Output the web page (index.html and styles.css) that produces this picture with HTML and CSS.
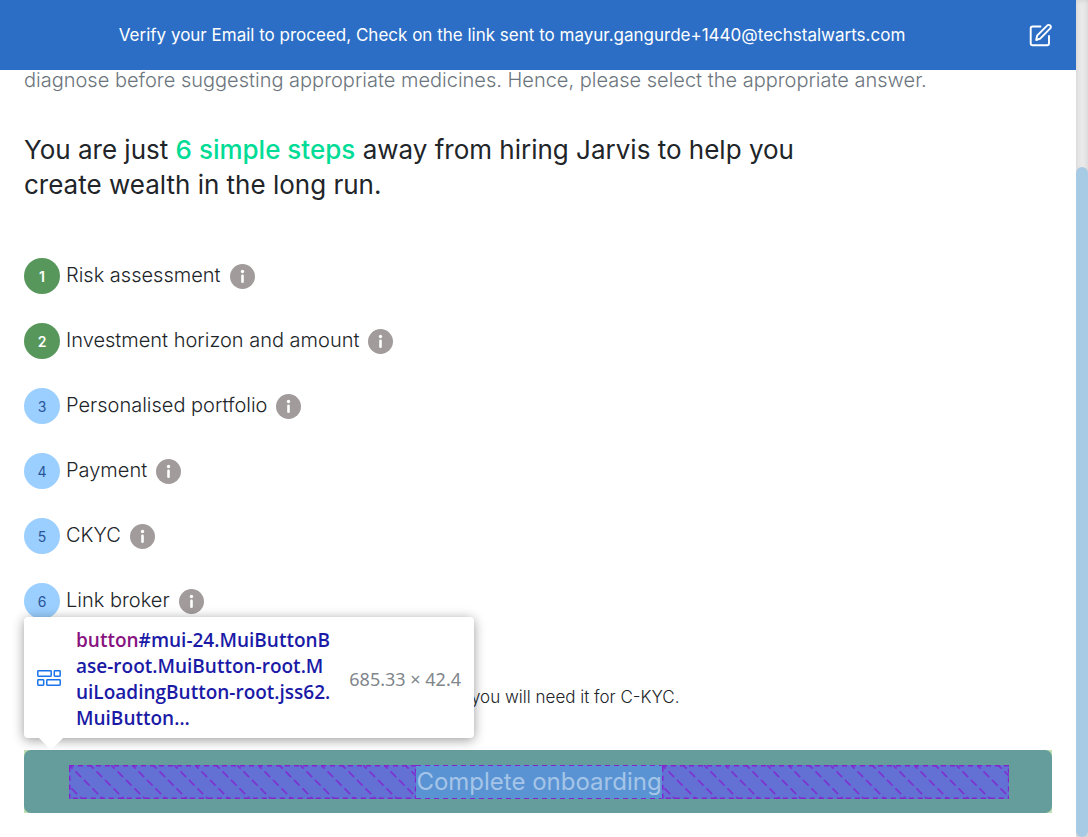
FILE: index.html
```html
<!DOCTYPE html>
<html lang="en">
<head>
<meta charset="utf-8">
<meta name="viewport" content="width=device-width, initial-scale=1">
<title>Onboarding</title>
<link rel="stylesheet" href="styles.css">
</head>
<body>
<svg class="defs" aria-hidden="true">
  <defs>
    <symbol id="info" viewBox="0 0 25 25">
      <circle cx="12.5" cy="12.5" r="12.5" fill="#a19c9b"/>
      <circle cx="12.5" cy="7.5" r="1.7" fill="#fff"/>
      <rect x="11.2" y="10.6" width="2.6" height="8.4" rx="1.2" fill="#fff"/>
    </symbol>
    <pattern id="hatch" width="21" height="36" patternUnits="userSpaceOnUse">
      <path d="M-44 -2L-2 40M-23 -2L19 40M-2 -2L40 40" fill="none" stroke="#7b34d0" stroke-width="1.8" stroke-dasharray="8 4"/>
    </pattern>
  </defs>
</svg>
<div class="page">
  <div class="view">
    <header class="banner">
      <p class="banner-text">Verify your Email to proceed, Check on the link sent to mayur.gangurde+1440@techstalwarts.com</p>
      <button class="edit" type="button" aria-label="Edit email">
        <svg width="24" height="24" viewBox="0 0 24 24" fill="none" stroke="#fff" stroke-width="1.9" stroke-linecap="round" stroke-linejoin="round">
          <path d="M12.500 3.500H4.600C3.600 3.500 2.700 4.300 2.700 5.300V20.300C2.700 21.300 3.500 22.200 4.600 22.200H19.100C20.200 22.200 21 21.300 21 20.300V13"/>
          <path d="M8.200 17L9.100 12.700L19.100 2.700C20 1.700 21.300 1.600 22.200 2.500C23.100 3.400 22.900 4.700 22 5.700L12.200 15.600Z"/>
        </svg>
      </button>
    </header>
    <main class="content">
      <p class="intro">diagnose before suggesting appropriate medicines. Hence, please select the appropriate answer.</p>
      <h1 class="title">You are just <span class="accent">6 simple steps</span> away from hiring Jarvis to help you create wealth in the long run.</h1>
      <ol class="steps">
        <li class="step done"><span class="num">1</span><span class="name">Risk assessment</span><svg class="info"><use href="#info"/></svg></li>
        <li class="step done"><span class="num">2</span><span class="name">Investment horizon and amount</span><svg class="info"><use href="#info"/></svg></li>
        <li class="step"><span class="num">3</span><span class="name">Personalised portfolio</span><svg class="info"><use href="#info"/></svg></li>
        <li class="step"><span class="num">4</span><span class="name">Payment</span><svg class="info"><use href="#info"/></svg></li>
        <li class="step"><span class="num">5</span><span class="name">CKYC</span><svg class="info"><use href="#info"/></svg></li>
        <li class="step"><span class="num">6</span><span class="name">Link broker</span><svg class="info"><use href="#info"/></svg></li>
      </ol>
      <p class="note">you will need it for C-KYC.</p>
      <div class="action">
        <button class="submit" type="button">
          <svg class="space"><rect width="100%" height="100%" fill="url(#hatch)"/><rect class="outline" width="100%" height="100%"/></svg>
          <span class="label">Complete onboarding</span>
          <svg class="space"><rect width="100%" height="100%" fill="url(#hatch)"/><rect class="outline" width="100%" height="100%"/></svg>
        </button>
        <div class="tooltip" role="tooltip">
          <svg width="24" height="18" viewBox="0 0 24 18" fill="none" stroke="#1a73e8" stroke-width="1.5">
            <rect x="0.800" y="0.800" width="13.400" height="5.400" rx="0.600"/><rect x="17.300" y="0.800" width="5.900" height="5.400" rx="0.600"/>
            <rect x="0.800" y="9.800" width="5.900" height="5.400" rx="0.600"/><rect x="9.800" y="9.800" width="13.400" height="5.400" rx="0.600"/>
          </svg>
          <p class="selector"><span class="tag">button</span>#mui-24.MuiButtonB<br>ase-root.MuiButton-root.M<br>uiLoadingButton-root.jss62.<br>MuiButton…</p>
          <span class="size">685.33 × 42.4</span>
        </div>
      </div>
    </main>
  </div>
  <div class="scrollbar" aria-hidden="true"><div class="thumb"></div></div>
</div>
</body>
</html>
```

FILE: styles.css
```css
* { box-sizing: border-box; }
body, p, h1, ol { margin: 0; padding: 0; }
body { font-family: "Inter", sans-serif; background: #fff; color: #212529; }
button { font: inherit; border: 0; cursor: pointer; }
.defs { position: absolute; width: 0; height: 0; }
.page { display: flex; min-height: 100vh; }
.view { flex: 1; min-width: 0; }

.banner { display: flex; align-items: center; height: 70px; padding: 0 24px; background: #2c6ec5; color: #fff; }
.banner-text { flex: 1; padding-right: 28px; text-align: center; font-size: 17px; line-height: 24px; }
.edit { display: flex; padding: 0; background: none; }

.content { padding: 0 24px 24px; }
.intro { font-size: 20px; line-height: 20px; font-weight: 300; color: #6c757d; }
.title { max-width: 800px; margin-top: 42px; font-size: 26px; line-height: 35px; font-weight: 400; }
.accent { color: #00dc96; font-weight: 500; }

.steps { display: grid; gap: 29px; margin-top: 56px; list-style: none; }
.step { display: flex; align-items: center; height: 36px; }
.num { display: grid; place-items: center; width: 36px; height: 36px; margin-right: 6px; border-radius: 50%; background: #9acfff; color: #2a5599; font-size: 14px; }
.done .num { background: #57975b; color: #fff; font-weight: 600; }
.name { padding-bottom: 2px; font-size: 20px; line-height: 30px; font-weight: 300; }
.info { width: 25px; height: 25px; margin-left: 9px; }

.note { margin: 66px 0 41px 447px; font-size: 17px; line-height: 24px; font-weight: 300; }

.action { position: relative; background: #c1deb3; }
.submit { display: flex; width: 100%; padding: 15px 43px 14px 45px; border-radius: 7px; background: #649d9b; }
.label { flex: none; padding: 1px 0; background: repeating-linear-gradient(90deg, #8424cf 0 5px, transparent 5px 9px) top / 100% 1px no-repeat, repeating-linear-gradient(90deg, #8424cf 0 5px, transparent 5px 9px) bottom / 100% 1px no-repeat, #5a93d3; color: #a5c5e8; font-size: 24px; line-height: 32px; }
.space { flex: 1; min-width: 0; height: 34px; background: #6370d4; }
.outline { fill: none; stroke: #8424cf; stroke-width: 3; stroke-dasharray: 5 4; }

.tooltip { position: absolute; left: 0; bottom: calc(100% + 12px); display: flex; align-items: center; width: 450px; padding: 10px 13px 7px; border-radius: 4px; background: #fff; box-shadow: 0 2px 12px rgba(0, 0, 0, 0.4); font-family: "Noto Sans", sans-serif; }
.tooltip::after { content: ""; position: absolute; top: 100%; left: 15px; border: 12px solid transparent; border-top-color: #fff; border-bottom: 0; }
.selector { flex: 1; margin-left: 15px; color: #1a1aa6; font-family: "Open Sans", sans-serif; font-size: 19px; line-height: 26px; font-weight: 600; white-space: nowrap; }
.tag { color: #881280; }
.size { color: #80868b; font-size: 18px; white-space: nowrap; }

.scrollbar { display: flex; flex-direction: column; justify-content: flex-end; width: 12px; background: #e9e9e9; box-shadow: inset 0 0 5px #ccc; }
.thumb { height: 80%; border-radius: 6px; background: #a8cbe5; }
```
